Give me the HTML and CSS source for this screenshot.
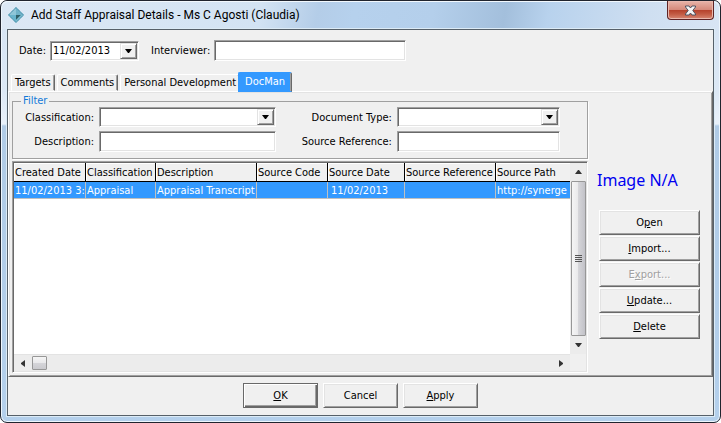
FILE: index.html
```html
<!DOCTYPE html>
<html lang="en">
<head>
<meta charset="utf-8">
<title>Add Staff Appraisal Details</title>
<link rel="stylesheet" href="styles.css">
</head>
<body>
<div class="window">
  <header class="titlebar">
    <svg class="app-icon" width="16" height="16" viewBox="0 0 16 16" aria-hidden="true">
      <path d="M8 0 16 8 8 16 0 8Z" fill="#5fa3ba"/>
      <path d="M8 1 8 8 1 8Z" fill="#8fc6d8"/>
      <path d="M8 1 15 8 8 8Z" fill="#6fb2c8"/>
      <path d="M1 8H8V15Z" fill="#68b4cc"/>
      <path d="M8 8H13L8 13Z" fill="#2f6068"/>
      <path d="M13 8H15L8 15V13Z" fill="#7abccf"/>
      <path d="M8 .5 15.5 8 8 15.5 .5 8Z" fill="none" stroke="#4a91ad" stroke-dasharray="1 1"/>
    </svg>
    <h1 class="title">Add Staff Appraisal Details - Ms C Agosti (Claudia)</h1>
    <button class="close" type="button" aria-label="Close">
      <svg width="13" height="11" viewBox="0 0 13 11" aria-hidden="true">
        <path d="M1.5 1H5L6.500 3 8 1H11.500V2L8.800 5.500 11.500 9V10H8L6.500 8 5 10H1.500V9L4.200 5.500 1.500 2Z" fill="#f4f4f4" stroke="#4f5260"/>
      </svg>
    </button>
  </header>

  <main class="client">
    <div class="top-row">
      <label for="date">Date:</label>
      <div class="combo date">
        <input id="date" type="text" value="11/02/2013">
        <button class="drop" type="button" aria-label="Choose date"><svg width="7" height="4" viewBox="0 0 7 4" aria-hidden="true"><path d="M0 0H7L4 4H3Z"/></svg></button>
      </div>
      <label class="label-interviewer" for="interviewer">Interviewer:</label>
      <input class="field interviewer" id="interviewer" type="text">
    </div>

    <nav class="tabs" role="tablist">
      <button class="tab" type="button" role="tab">Targets</button>
      <button class="tab" type="button" role="tab">Comments</button>
      <button class="tab" type="button" role="tab">Personal Development</button>
      <button class="tab selected" type="button" role="tab" aria-selected="true">DocMan</button>
    </nav>

    <section class="page">
      <div class="documents">
        <fieldset class="filter">
          <legend>Filter</legend>
          <div class="filter-grid">
            <label for="classification">Classification:</label>
            <div class="combo">
              <select id="classification"><option></option></select>
              <span class="drop over"><svg width="7" height="4" viewBox="0 0 7 4" aria-hidden="true"><path d="M0 0H7L4 4H3Z"/></svg></span>
            </div>
            <label for="doctype">Document Type:</label>
            <div class="combo">
              <select id="doctype"><option></option></select>
              <span class="drop over"><svg width="7" height="4" viewBox="0 0 7 4" aria-hidden="true"><path d="M0 0H7L4 4H3Z"/></svg></span>
            </div>
            <label for="description">Description:</label>
            <input class="field" id="description" type="text">
            <label for="reference">Source Reference:</label>
            <input class="field" id="reference" type="text">
          </div>
        </fieldset>

        <div class="list">
          <div class="rows">
            <table>
              <colgroup>
                <col class="c-created"><col class="c-class"><col class="c-desc"><col class="c-code"><col class="c-date"><col class="c-ref"><col>
              </colgroup>
              <thead>
                <tr><th>Created Date</th><th>Classification</th><th>Description</th><th>Source Code</th><th>Source Date</th><th>Source Reference</th><th>Source Path</th></tr>
              </thead>
              <tbody>
                <tr><td>11/02/2013 3:</td><td>Appraisal</td><td>Appraisal Transcript</td><td></td><td class="indent">11/02/2013</td><td></td><td>http://synerge</td></tr>
              </tbody>
            </table>
          </div>
          <div class="vscroll">
            <svg class="arrow" width="7" height="4" viewBox="0 0 7 4" aria-hidden="true"><path d="M0 4 3 0H4L7 4Z"/></svg>
            <div class="vthumb"><i></i><i></i><i></i><i></i></div>
            <svg class="arrow" width="7" height="4" viewBox="0 0 7 4" aria-hidden="true"><path d="M0 0H7L4 4H3Z"/></svg>
          </div>
          <div class="hscroll">
            <svg width="4" height="7" viewBox="0 0 4 7" aria-hidden="true"><path d="M4 0V7L0 4V3Z"/></svg>
            <div class="hthumb"></div>
            <svg class="right" width="4" height="7" viewBox="0 0 4 7" aria-hidden="true"><path d="M0 0V7L4 4V3Z"/></svg>
          </div>
        </div>
      </div>

      <aside class="side">
        <p class="image-status">Image N/A</p>
        <button class="btn" type="button">O<u>p</u>en</button>
        <button class="btn" type="button"><u>I</u>mport...</button>
        <button class="btn" type="button" disabled>E<u>x</u>port...</button>
        <button class="btn" type="button"><u>U</u>pdate...</button>
        <button class="btn" type="button"><u>D</u>elete</button>
      </aside>
    </section>

    <footer class="actions">
      <button class="btn default" type="button"><u>O</u>K</button>
      <button class="btn" type="button">Cancel</button>
      <button class="btn" type="button"><u>A</u>pply</button>
    </footer>
  </main>
</div>
</body>
</html>
```
FILE: styles.css
```css
* { box-sizing: border-box; }

body {
  margin: 0;
  background: #fff;
  color: #000;
  font: 11px/13px "DejaVu Sans Condensed", "DejaVu Sans", sans-serif;
}

button, input, select {
  margin: 0;
  font: inherit;
  color: inherit;
  border-radius: 0;
}

.window {
  display: flex;
  flex-direction: column;
  min-height: 100vh;
  padding: 0 6px 6px;
  border: 1px solid #20242e;
  border-radius: 7px;
  background:
    linear-gradient(#d5e3f3 0, #dce8f5 90px, #e9f1fa 123px, #b0cbe6 125px, #b4d0ec 100%);
  box-shadow: inset 0 0 0 1px #eef6fd;
}

.titlebar {
  display: flex;
  align-items: center;
  height: 28px;
  margin: 0 -5px;
  padding: 0 5px 0 6px;
  border-radius: 6px 6px 0 0;
  background: linear-gradient(100deg, #dce8f5 0, #d3e3f3 36%, #b4cde8 44%, #b6d1ed 49%, #b4cfeb 60%, #a3bfdc 70%, #b8d2ed 76%, #cfdff1 90%, #d8e5f4 100%);
  box-shadow: inset 0 1px 0 #f2f8fd;
}

.title {
  flex: 1;
  margin: 0 0 0 7px;
  font: 12px/16px Roboto, "Noto Sans", sans-serif;
}

.close {
  display: flex;
  align-items: center;
  justify-content: center;
  align-self: flex-start;
  width: 47px;
  height: 19px;
  padding: 0;
  border: 1px solid #5e2325;
  border-top: 0;
  border-radius: 0 0 4px 4px;
  background: linear-gradient(#e8b4a9 0, #d58879 9px, #b5402b 9px, #c25a43 13px, #d88773 100%);
  box-shadow: inset 0 0 0 1px #e9b8ae;
}

.client {
  flex: 1;
  display: flex;
  flex-direction: column;
  border: 1px solid #566069;
  background: #f0f0f0;
  box-shadow: 0 0 0 1px #dcebf6;
}

.top-row {
  display: flex;
  align-items: center;
  padding: 10px 11px 0;
}

.combo {
  position: relative;
  display: flex;
  height: 20px;
  min-width: 0;
  border: 1px solid;
  border-color: #a0a0a0 #fff #fff #a0a0a0;
  background: #fff;
  box-shadow: inset 1px 1px #696969, inset -1px -1px #e3e3e3;
}

.combo input, .combo select {
  flex: 1;
  width: 100%;
  min-width: 0;
  padding: 0 2px;
  border: 0;
  outline: 0;
  background: transparent;
  appearance: none;
}

.date { width: 89px; margin-left: 4px; }

.drop {
  display: flex;
  align-items: center;
  justify-content: center;
  width: 17px;
  margin: 1px;
  padding: 0;
  border: 1px solid;
  border-color: #e3e3e3 #696969 #696969 #e3e3e3;
  background: #f0f0f0;
  box-shadow: inset 1px 1px #fff, inset -1px -1px #a0a0a0;
}

.drop.over {
  position: absolute;
  inset: 0 0 0 auto;
  pointer-events: none;
}

.label-interviewer { margin-left: 12px; }

.field {
  width: 100%;
  min-width: 0;
  height: 21px;
  padding: 0 3px;
  border: 1px solid;
  border-color: #a0a0a0 #fff #fff #a0a0a0;
  outline: 0;
  background: #fff;
  box-shadow: inset 1px 1px #696969, inset -1px -1px #e3e3e3;
}

.interviewer { width: 192px; margin-left: 4px; }

.tabs {
  display: flex;
  align-items: flex-end;
  height: 30px;
  padding-left: 3px;
}

.tab {
  height: 17px;
  margin-right: 2px;
  padding: 0 3px;
  border: 1px solid;
  border-color: #fff #696969 transparent #fff;
  border-radius: 2px 2px 0 0;
  background: #f0f0f0;
  box-shadow: inset -1px 0 #a0a0a0;
  white-space: nowrap;
}

.tab.selected {
  position: relative;
  height: 20px;
  margin: 0 0 -1px -4px;
  padding: 0 6px 2px;
  border-color: #3399ff #696969 #3399ff #3399ff;
  background: #3399ff;
  color: #fff;
}

.page {
  flex: 1;
  display: flex;
  padding: 3px 12px 3px 3px;
  border: 1px solid;
  border-color: #fff #696969 #696969 #fff;
  box-shadow: inset 1px 1px #e3e3e3, inset -1px -1px #a0a0a0;
}

.documents {
  flex: 1;
  display: flex;
  flex-direction: column;
  min-width: 0;
}

.filter {
  min-width: 0;
  margin: 0 0 2px;
  padding: 0 27px 6px 0;
  border: 1px solid #a0a0a0;
  box-shadow: 1px 1px #fff;
}

.filter legend {
  height: 12px;
  margin-left: 8px;
  padding: 0 2px;
  color: #1379d8;
  line-height: 12px;
}

.filter-grid {
  display: grid;
  grid-template-columns: 81px 180fr 111px 166fr;
  gap: 4px 5px;
  align-items: center;
}

.filter-grid label { text-align: right; white-space: nowrap; }

.list {
  flex: 1;
  display: grid;
  grid-template: 1fr 17px / 1fr 16px;
  border: 1px solid;
  border-color: #a0a0a0 #fff #fff #a0a0a0;
  background: #f0f0f0;
  padding: 1px;
  box-shadow: inset 1px 1px #696969, inset -1px -1px #e3e3e3;
}

.rows {
  min-width: 0;
  overflow: hidden;
  background: #fff;
}

table {
  width: 100%;
  border-collapse: separate;
  border-spacing: 0;
  table-layout: fixed;
}

.c-created { width: 72px; }
.c-class { width: 70px; }
.c-desc { width: 101px; }
.c-code { width: 71px; }
.c-date { width: 77px; }
.c-ref { width: 91px; }

th, td {
  overflow: hidden;
  padding: 0 0 0 1px;
  font-weight: normal;
  text-align: left;
  white-space: nowrap;
}

th {
  height: 19px;
  border-right: 1px solid #000;
  border-bottom: 1px solid #000;
  background: #f0f0f0;
  box-shadow: inset 1px 1px #fff;
}

td {
  height: 17px;
  border-right: 1px solid #c0c0c0;
  border-bottom: 1px solid #c0c0c0;
  background: #3399ff;
  color: #fff;
}

td.indent { padding-left: 3px; }
th:last-child, td:last-child { border-right: 0; }

.vscroll {
  display: flex;
  flex-direction: column;
  align-items: center;
  background: #ececec;
}

.vscroll svg, .hscroll svg { fill: #333; }

.vscroll .arrow {
  margin: 7px 0;
}

.vthumb {
  flex: 1;
  display: flex;
  flex-direction: column;
  align-items: center;
  justify-content: center;
  gap: 1px;
  width: 15px;
  border: 1px solid #979797;
  border-radius: 1px;
  background: linear-gradient(90deg, #f5f5f5 0, #e9e9eb 48%, #d5d5d9 50%, #c2c2c8 100%);
}

.vthumb i {
  width: 7px;
  height: 1px;
  background: #555;
}

.hscroll {
  display: flex;
  align-items: center;
  padding: 0 7px;
  border-top: 1px solid #e3e3e3;
  background: #ececec;
}

.hthumb {
  width: 15px;
  height: 14px;
  margin-left: 7px;
  border: 1px solid #979797;
  border-radius: 1px;
  background: linear-gradient(#f5f5f5 0, #e9e9eb 48%, #d5d5d9 50%, #cacace 100%);
}

.right { margin-left: auto; }

.side {
  display: flex;
  flex-direction: column;
  gap: 1px;
  width: 112px;
  padding: 76px 0 0 11px;
}

.image-status {
  margin: 0 0 20px -2px;
  color: #0000f0;
  font: 16px/18px "Noto Sans", "Open Sans", sans-serif;
  white-space: nowrap;
}

.btn {
  height: 25px;
  padding: 0;
  border: 1px solid;
  border-color: #fff #696969 #696969 #fff;
  background: #f0f0f0;
  box-shadow: inset 1px 1px #e3e3e3, inset -1px -1px #a0a0a0;
}

.btn:disabled {
  color: #a0a0a0;
  text-shadow: 1px 1px #fff;
}

.actions {
  display: flex;
  justify-content: center;
  gap: 5px;
  padding: 6px 0 7px;
}

.actions .btn { width: 75px; }

.btn.default {
  border-color: #696969;
  box-shadow: inset 1px 1px #fff, inset -1px -1px #696969, inset -2px -2px #a0a0a0;
}
```
